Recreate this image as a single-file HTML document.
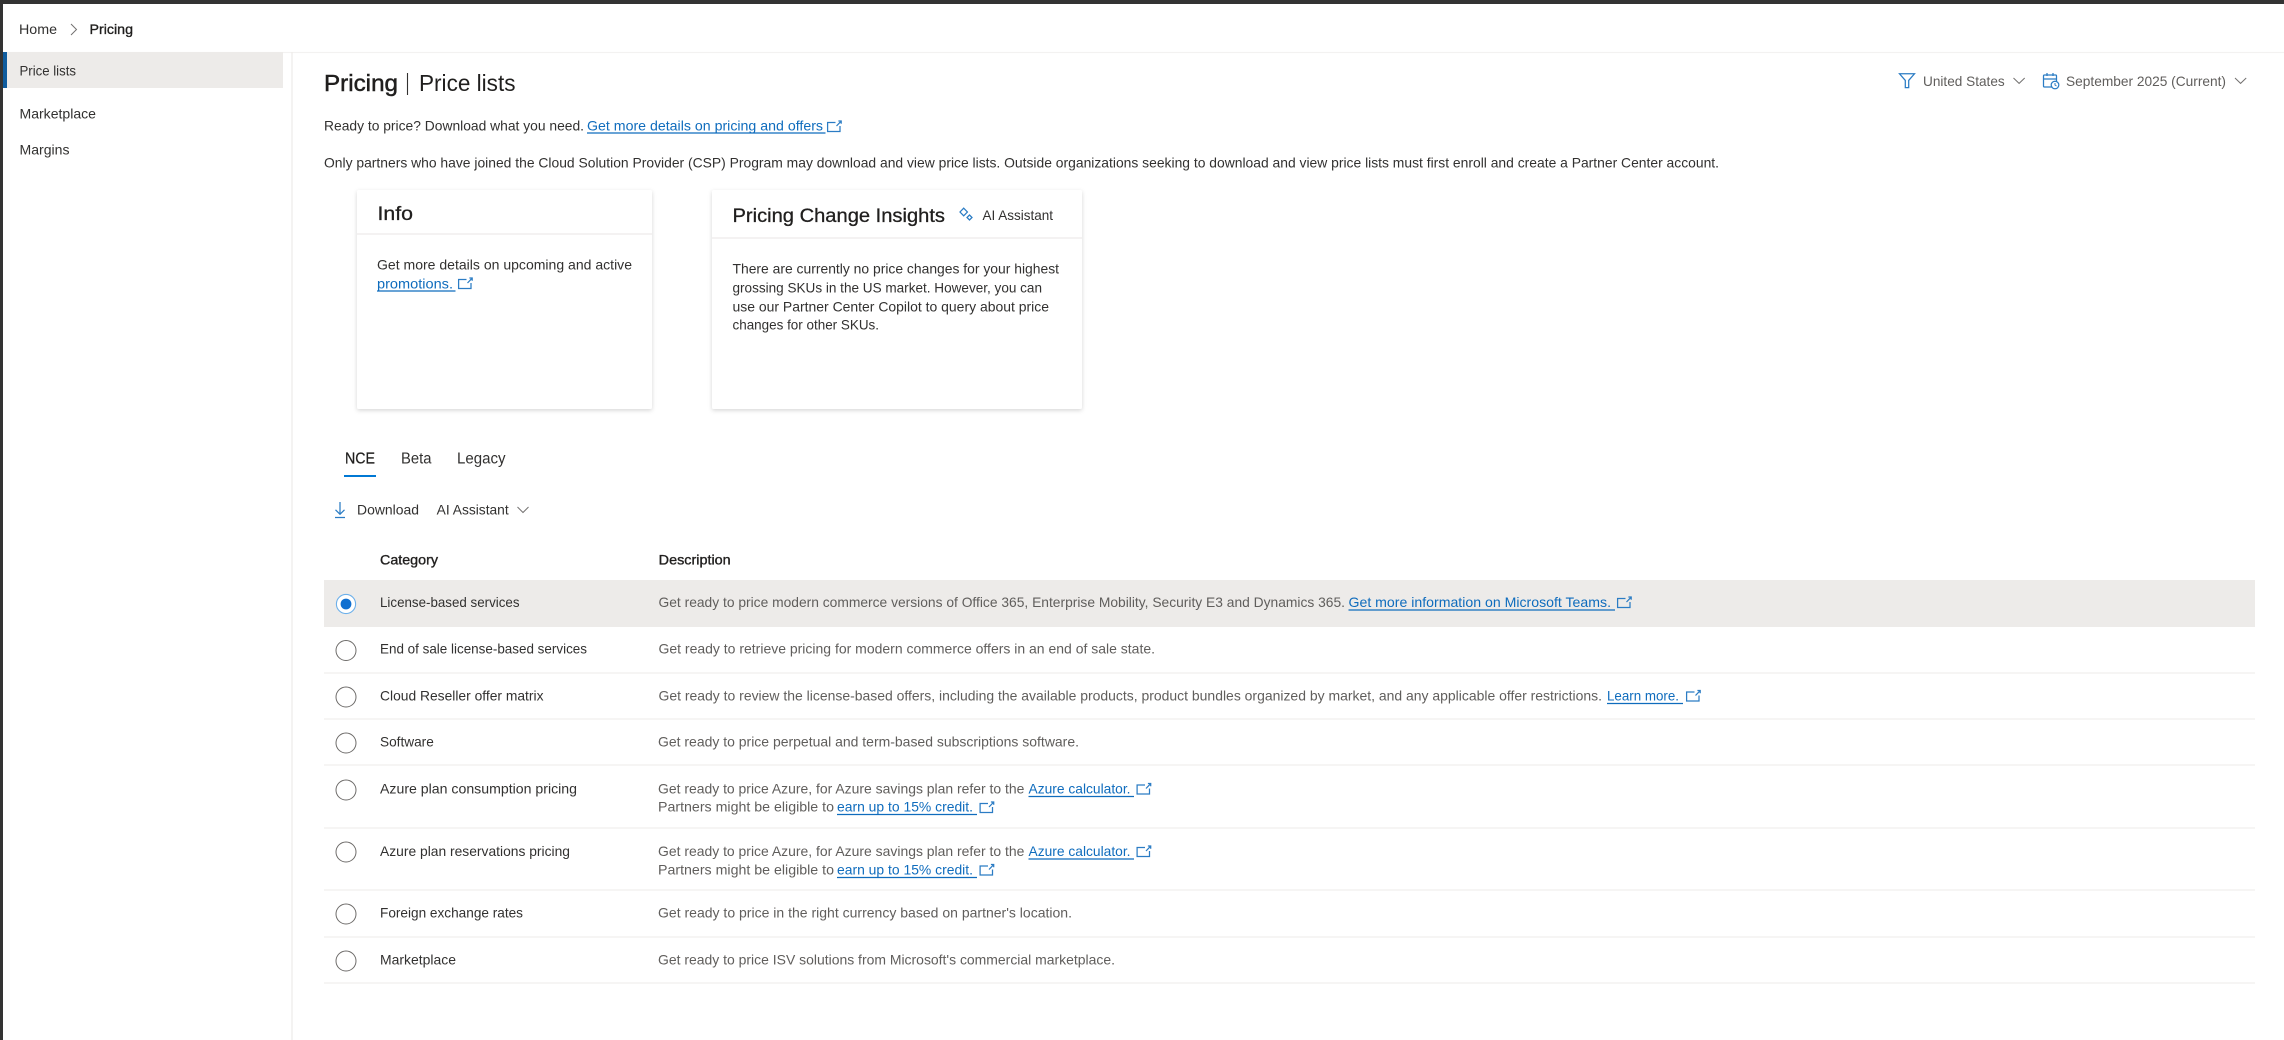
<!DOCTYPE html>
<html lang="en">
<head>
<meta charset="utf-8">
<title>Pricing | Price lists</title>
<style>
html,body{margin:0;padding:0;background:#fff;width:2284px;height:1040px;overflow:hidden}
svg{display:block;filter:blur(.25px)}
text{font-family:"Liberation Sans",sans-serif;font-size:13.6px;fill:#323130}
.d{fill:#605e5c}
.l{fill:#0f6cbd}
.b{stroke:#201f1e;stroke-width:.35;fill:#201f1e}
.u{stroke:#0f6cbd;stroke-width:1.2}
.r{fill:#fff;stroke:#6e6c6a;stroke-width:1}
.s{stroke:#f3f2f1;stroke-width:1.5}
.i{fill:none;stroke:#2b7cc4;stroke-width:1.25}
.c{fill:none;stroke:#737170;stroke-width:1}
</style>
</head>
<body>
<svg width="2284" height="1040" viewBox="0 0 2284 1040" xmlns="http://www.w3.org/2000/svg">
<defs>
<g id="x" class="i"><path d="M8.5 2.5H.6v9h12.4V6"/><path d="M9.5 6l4-4.2M11.4 1h2.8v2.8"/></g>
<filter id="sh" x="-5%" y="-5%" width="110%" height="112%"><feDropShadow dx="0" dy="1.5" stdDeviation="2" flood-color="#000" flood-opacity=".16"/></filter>
</defs>

<rect width="2284" height="4" fill="#333"/>
<rect width="3" height="1040" fill="#333"/>

<!-- breadcrumb -->
<text x="19" y="34" textLength="38" lengthAdjust="spacingAndGlyphs">Home</text>
<path class="c" d="M71 24l5.5 5.5L71 35"/>
<text x="89.5" y="34" textLength="43.5" lengthAdjust="spacingAndGlyphs" class="b">Pricing</text>
<line x1="3" y1="52.5" x2="2284" y2="52.5" stroke="#f3f2f1" stroke-width="1.2"/>

<!-- sidebar -->
<rect x="3" y="52" width="280" height="36" fill="#edebe9"/>
<rect x="3" y="52" width="4" height="36" fill="#0f5c9e"/>
<line x1="292" y1="52" x2="292" y2="1040" stroke="#edebe9" stroke-width="1.2"/>
<text x="19.5" y="75.5" textLength="56.5" lengthAdjust="spacingAndGlyphs">Price lists</text>
<text x="19.5" y="118.5" textLength="76.5" lengthAdjust="spacingAndGlyphs">Marketplace</text>
<text x="19.5" y="154.5" textLength="50" lengthAdjust="spacingAndGlyphs">Margins</text>

<!-- title -->
<text x="324" y="91" textLength="74" lengthAdjust="spacingAndGlyphs" style="font-size:23.5px;stroke-width:.5" class="b">Pricing</text>
<line x1="407.5" y1="73" x2="407.5" y2="95" stroke="#323130" stroke-width="1.1"/>
<text x="419" y="91" textLength="96.5" lengthAdjust="spacingAndGlyphs" style="font-size:23.5px;fill:#201f1e">Price lists</text>

<!-- filters -->
<path class="i" d="M1899.5 73.8h15l-5.8 6.6v7.2h-3.4v-7.2z"/>
<text x="1923" y="86" textLength="81.7" lengthAdjust="spacingAndGlyphs" class="d">United States</text>
<path class="c" d="M2013.5 78l5.6 5.4 5.6-5.4"/>
<g class="i"><rect x="2043.5" y="75" width="13" height="12" rx="1"/><path d="M2043.5 79h13M2047 73v3M2053 73v3"/><circle cx="2055" cy="85" r="3.8" fill="#fff"/><path d="M2055 83v2l1.5 1" stroke-width="1"/></g>
<text x="2066" y="86" textLength="160" lengthAdjust="spacingAndGlyphs" class="d">September 2025 (Current)</text>
<path class="c" d="M2235 78l5.6 5.4 5.6-5.4"/>

<!-- intro -->
<text x="324" y="130.5" textLength="260" lengthAdjust="spacingAndGlyphs">Ready to price? Download what you need.</text>
<text x="587" y="130.5" textLength="236" lengthAdjust="spacingAndGlyphs" class="l">Get more details on pricing and offers</text>
<line class="u" x1="587" y1="133" x2="825.5" y2="133"/>
<use href="#x" x="827" y="120"/>
<text x="324" y="167.5" textLength="1395" lengthAdjust="spacingAndGlyphs">Only partners who have joined the Cloud Solution Provider (CSP) Program may download and view price lists. Outside organizations seeking to download and view price lists must first enroll and create a Partner Center account.</text>

<!-- cards -->
<rect x="357" y="190" width="295" height="219" rx="2" fill="#fff" filter="url(#sh)"/>
<line x1="357" y1="234" x2="652" y2="234" stroke="#edebe9" stroke-width="1.2"/>
<text x="377.5" y="220" textLength="35.5" lengthAdjust="spacingAndGlyphs" style="font-size:19.5px;stroke-width:.3" class="b">Info</text>
<text x="377" y="269.5" textLength="255" lengthAdjust="spacingAndGlyphs">Get more details on upcoming and active</text>
<text x="377" y="288.5" textLength="76" lengthAdjust="spacingAndGlyphs" class="l">promotions.</text>
<line class="u" x1="377" y1="291" x2="455.5" y2="291"/>
<use href="#x" x="458" y="277"/>

<rect x="712" y="190" width="370" height="219" rx="2" fill="#fff" filter="url(#sh)"/>
<line x1="712" y1="238" x2="1082" y2="238" stroke="#edebe9" stroke-width="1.2"/>
<text x="732.5" y="222" textLength="212.5" lengthAdjust="spacingAndGlyphs" style="font-size:19.5px;stroke-width:.3" class="b">Pricing Change Insights</text>
<g class="i"><path d="M963.7 208.2l3.7 3.8-3.7 3.8-3.7-3.8z"/><path d="M969.5 215l2.5 2.5-2.5 2.5-2.5-2.5z"/></g>
<text x="982.5" y="220" textLength="70.5" lengthAdjust="spacingAndGlyphs">AI Assistant</text>
<text x="732.5" y="273.5" textLength="326.5" lengthAdjust="spacingAndGlyphs">There are currently no price changes for your highest</text>
<text x="732.5" y="292.5" textLength="309.5" lengthAdjust="spacingAndGlyphs">grossing SKUs in the US market. However, you can</text>
<text x="732.5" y="311.5" textLength="316.5" lengthAdjust="spacingAndGlyphs">use our Partner Center Copilot to query about price</text>
<text x="732.5" y="329.5" textLength="146.5" lengthAdjust="spacingAndGlyphs">changes for other SKUs.</text>

<!-- tabs -->
<text x="345" y="463.5" textLength="30" lengthAdjust="spacingAndGlyphs" style="font-size:15.5px;stroke-width:.25" class="b">NCE</text>
<rect x="344" y="475" width="32" height="2" fill="#0078d4"/>
<text x="401" y="463.5" textLength="30.5" lengthAdjust="spacingAndGlyphs" style="font-size:15.5px">Beta</text>
<text x="457" y="463.5" textLength="48.5" lengthAdjust="spacingAndGlyphs" style="font-size:15.5px">Legacy</text>

<!-- toolbar -->
<path class="i" d="M340 502v12M335.5 509.8l4.5 4.5 4.5-4.5M335 517.5h10"/>
<text x="357" y="514.5" textLength="62" lengthAdjust="spacingAndGlyphs">Download</text>
<text x="436.7" y="514.5" textLength="72" lengthAdjust="spacingAndGlyphs">AI Assistant</text>
<path class="c" d="M517.5 507l5.5 5.5 5.5-5.5"/>

<!-- table header -->
<text x="380" y="564.5" textLength="58" lengthAdjust="spacingAndGlyphs" class="b">Category</text>
<text x="658.7" y="564.5" textLength="72" lengthAdjust="spacingAndGlyphs" class="b">Description</text>

<!-- rows -->
<rect x="324" y="580" width="1931" height="47" fill="#edebe9"/>
<circle cx="346" cy="604" r="9.6" fill="#fff" stroke="#6db0ea" stroke-width="1.1"/>
<circle cx="346" cy="604" r="5.4" fill="#0f6fd0"/>
<text x="380" y="607" textLength="139.5" lengthAdjust="spacingAndGlyphs">License-based services</text>
<text x="658.5" y="607" textLength="686.5" lengthAdjust="spacingAndGlyphs" class="d">Get ready to price modern commerce versions of Office 365, Enterprise Mobility, Security E3 and Dynamics 365.</text>
<text x="1348.5" y="607" textLength="262.5" lengthAdjust="spacingAndGlyphs" class="l">Get more information on Microsoft Teams.</text>
<line class="u" x1="1348.5" y1="610" x2="1615" y2="610"/>
<use href="#x" x="1617" y="596"/>

<circle class="r" cx="346" cy="650.5" r="10"/>
<text x="380" y="653.5" textLength="207" lengthAdjust="spacingAndGlyphs">End of sale license-based services</text>
<text x="658.5" y="653.5" textLength="496.5" lengthAdjust="spacingAndGlyphs" class="d">Get ready to retrieve pricing for modern commerce offers in an end of sale state.</text>
<line class="s" x1="324" y1="673" x2="2255" y2="673"/>

<circle class="r" cx="346" cy="697" r="10"/>
<text x="380" y="700.5" textLength="163.5" lengthAdjust="spacingAndGlyphs">Cloud Reseller offer matrix</text>
<text x="658.5" y="700.5" textLength="943.5" lengthAdjust="spacingAndGlyphs" class="d">Get ready to review the license-based offers, including the available products, product bundles organized by market, and any applicable offer restrictions.</text>
<text x="1607" y="700.5" textLength="72" lengthAdjust="spacingAndGlyphs" class="l">Learn more.</text>
<line class="u" x1="1607" y1="703.5" x2="1683" y2="703.5"/>
<use href="#x" x="1686" y="689.5"/>
<line class="s" x1="324" y1="719" x2="2255" y2="719"/>

<circle class="r" cx="346" cy="743" r="10"/>
<text x="380" y="746.5" textLength="53.8" lengthAdjust="spacingAndGlyphs">Software</text>
<text x="658" y="746.5" textLength="421" lengthAdjust="spacingAndGlyphs" class="d">Get ready to price perpetual and term-based subscriptions software.</text>
<line class="s" x1="324" y1="765" x2="2255" y2="765"/>

<circle class="r" cx="346" cy="790" r="10"/>
<text x="380" y="793.5" textLength="197" lengthAdjust="spacingAndGlyphs">Azure plan consumption pricing</text>
<text x="658" y="793.5" textLength="366.4" lengthAdjust="spacingAndGlyphs" class="d">Get ready to price Azure, for Azure savings plan refer to the</text>
<text x="1028.5" y="793.5" textLength="102" lengthAdjust="spacingAndGlyphs" class="l">Azure calculator.</text>
<line class="u" x1="1028.5" y1="796.5" x2="1134" y2="796.5"/>
<use href="#x" x="1136.5" y="782.5"/>
<text x="658" y="811.5" textLength="176" lengthAdjust="spacingAndGlyphs" class="d">Partners might be eligible to</text>
<text x="837" y="811.5" textLength="136" lengthAdjust="spacingAndGlyphs" class="l">earn up to 15% credit.</text>
<line class="u" x1="837" y1="814.5" x2="977" y2="814.5"/>
<use href="#x" x="979.5" y="801"/>
<line class="s" x1="324" y1="828" x2="2255" y2="828"/>

<circle class="r" cx="346" cy="852" r="10"/>
<text x="380" y="856" textLength="190" lengthAdjust="spacingAndGlyphs">Azure plan reservations pricing</text>
<text x="658" y="856" textLength="366.4" lengthAdjust="spacingAndGlyphs" class="d">Get ready to price Azure, for Azure savings plan refer to the</text>
<text x="1028.5" y="856" textLength="102" lengthAdjust="spacingAndGlyphs" class="l">Azure calculator.</text>
<line class="u" x1="1028.5" y1="859" x2="1134" y2="859"/>
<use href="#x" x="1136.5" y="845"/>
<text x="658" y="874.5" textLength="176" lengthAdjust="spacingAndGlyphs" class="d">Partners might be eligible to</text>
<text x="837" y="874.5" textLength="136" lengthAdjust="spacingAndGlyphs" class="l">earn up to 15% credit.</text>
<line class="u" x1="837" y1="877.5" x2="977" y2="877.5"/>
<use href="#x" x="979.5" y="863.5"/>
<line class="s" x1="324" y1="890" x2="2255" y2="890"/>

<circle class="r" cx="346" cy="914" r="10"/>
<text x="380" y="917.5" textLength="143" lengthAdjust="spacingAndGlyphs">Foreign exchange rates</text>
<text x="658" y="917.5" textLength="414" lengthAdjust="spacingAndGlyphs" class="d">Get ready to price in the right currency based on partner's location.</text>
<line class="s" x1="324" y1="937" x2="2255" y2="937"/>

<circle class="r" cx="346" cy="961" r="10"/>
<text x="380" y="964.5" textLength="76" lengthAdjust="spacingAndGlyphs">Marketplace</text>
<text x="658" y="964.5" textLength="457" lengthAdjust="spacingAndGlyphs" class="d">Get ready to price ISV solutions from Microsoft's commercial marketplace.</text>
<line class="s" x1="324" y1="983" x2="2255" y2="983"/>
</svg>
</body>
</html>
